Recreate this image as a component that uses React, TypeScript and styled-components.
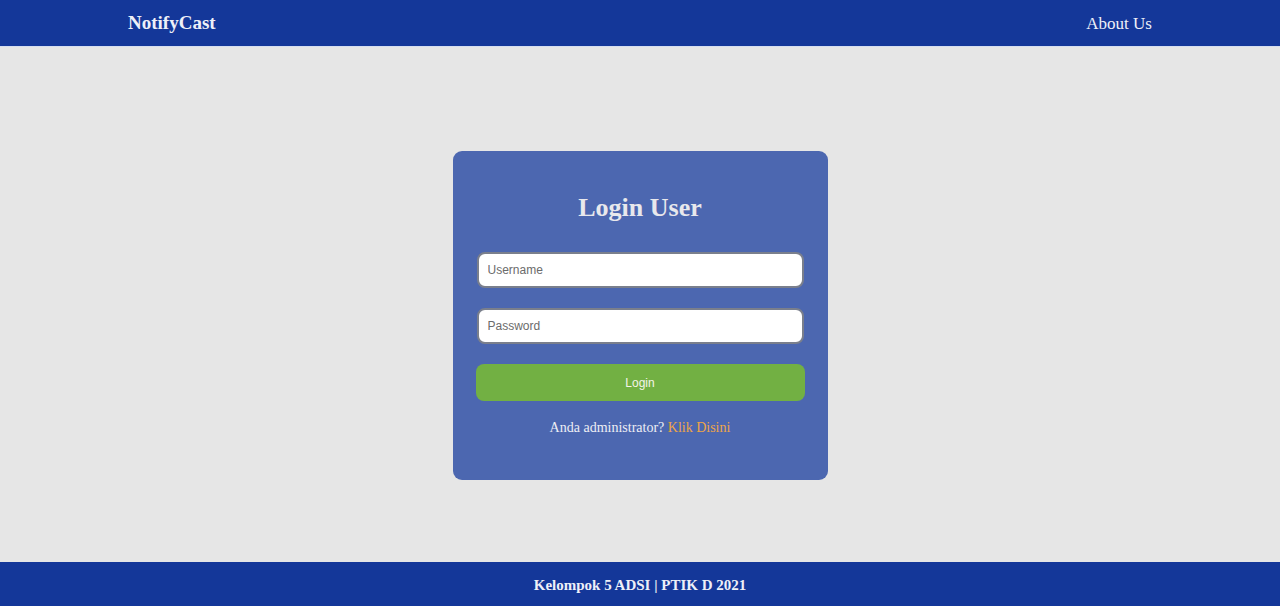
import React from "react";
import styled, { createGlobalStyle } from "styled-components";

const Global = createGlobalStyle`
  html, body { margin: 0; padding: 0; }
  body { font-family: "Liberation Serif", "Times New Roman", serif; background: #e6e6e6; }
  #root { min-height: 100vh; }
`;

const Page = styled.div`
  display: flex;
  flex-direction: column;
  height: 606px;
`;

const Header = styled.header`
  height: 46px;
  background: #143799;
  border-bottom: 1px solid #d6def0;
  display: flex;
  align-items: center;
  justify-content: space-between;
  padding: 0 128px;
  box-sizing: content-box;
`;

const Brand = styled.div`
  color: #eef0f8;
  font-weight: bold;
  font-size: 19px;
  padding-bottom: 1px;
`;

const NavLink = styled.a`
  color: #eef0f8;
  font-size: 17px;
  text-decoration: none;
  padding-top: 2px;
`;

const Main = styled.main`
  flex: 1;
  display: flex;
  align-items: center;
  justify-content: center;
  background: #e6e6e6;
  padding-top: 1px;
`;

const Card = styled.div`
  width: 375px;
  height: 329px;
  box-sizing: border-box;
  background: #4c67b0;
  border-radius: 9px;
  padding: 40px 23px 0;
  display: flex;
  flex-direction: column;
  margin-top: 21px;
`;

const Title = styled.h1`
  margin: 0 0 27px;
  text-align: center;
  color: #e8e8ec;
  font-size: 26px;
  font-weight: bold;
  line-height: 34px;
`;

const Input = styled.input`
  height: 36px;
  margin: 0 1px 20px;
  box-sizing: border-box;
  border: 2px solid #7a7f8c;
  border-radius: 8px;
  background: #fff;
  padding: 0 9px;
  font-family: "Liberation Sans", Arial, sans-serif;
  font-size: 12px;
  color: #333;
  outline: none;
  &::placeholder { color: #6b6b6b; }
`;

const Button = styled.button`
  height: 37px;
  border: none;
  border-radius: 8px;
  background: #72b043;
  color: #f4f4e8;
  font-family: "Liberation Sans", Arial, sans-serif;
  font-size: 12px;
  cursor: pointer;
`;

const Note = styled.p`
  margin: 19px 0 0;
  text-align: center;
  color: #eeeef4;
  font-size: 14px;
`;

const Link = styled.a`
  color: #eda547;
  text-decoration: none;
`;

const Footer = styled.footer`
  height: 44px;
  background: #143799;
  display: flex;
  align-items: center;
  justify-content: center;
  color: #eef0f8;
  font-weight: bold;
  font-size: 15px;
  padding-top: 2px;
  box-sizing: border-box;
`;

export default function App() {
  return (
    <Page>
      <Global />
      <Header>
        <Brand>NotifyCast</Brand>
        <NavLink href="#">About Us</NavLink>
      </Header>
      <Main>
        <Card>
          <Title>Login User</Title>
          <Input type="text" placeholder="Username" />
          <Input type="password" placeholder="Password" />
          <Button>Login</Button>
          <Note>
            Anda administrator? <Link href="#">Klik Disini</Link>
          </Note>
        </Card>
      </Main>
      <Footer>Kelompok 5 ADSI | PTIK D 2021</Footer>
    </Page>
  );
}
